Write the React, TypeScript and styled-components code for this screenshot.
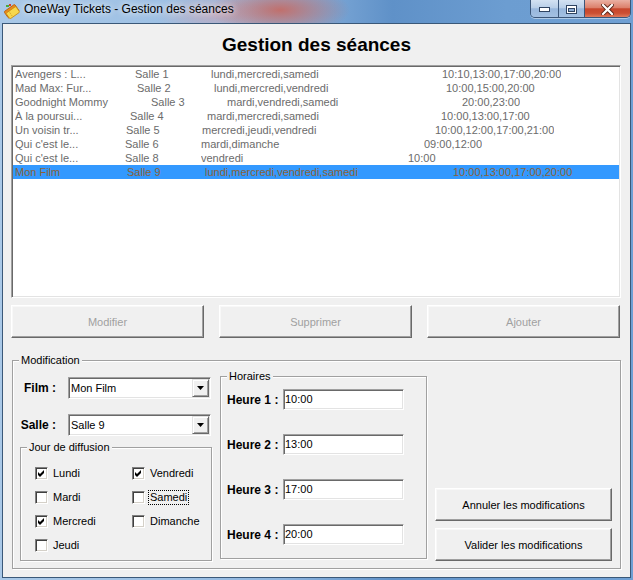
import React from 'react';
import styled, { createGlobalStyle } from 'styled-components';

const GlobalStyle = createGlobalStyle`
  html, body {
    margin: 0;
    padding: 0;
  }

  body {
    background: #6f9bd0;
    font-family: "Liberation Sans", Arial, sans-serif;
  }

  * {
    box-sizing: border-box;
  }
`;

type Seance = {
  film: string;
  salle: string;
  jours: string;
  heures: string;
  widths: [number, number, number];
  selected?: boolean;
};

// les colonnes sont alignées par tabulation dans la liste d'origine
const seances: Seance[] = [
  { film: 'Avengers : L...', salle: 'Salle 1', jours: 'lundi,mercredi,samedi', heures: '10:10,13:00,17:00,20:00', widths: [120, 76, 231] },
  { film: 'Mad Max: Fur...', salle: 'Salle 2', jours: 'lundi,mercredi,vendredi', heures: '10:00,15:00,20:00', widths: [122, 77, 232] },
  { film: 'Goodnight Mommy', salle: 'Salle 3', jours: 'mardi,vendredi,samedi', heures: '20:00,23:00', widths: [136, 76, 235] },
  { film: 'À la poursui...', salle: 'Salle 4', jours: 'mardi,mercredi,samedi', heures: '10:00,13:00,17:00', widths: [115, 77, 234] },
  { film: 'Un voisin tr...', salle: 'Salle 5', jours: 'mercredi,jeudi,vendredi', heures: '10:00,12:00,17:00,21:00', widths: [111, 76, 233] },
  { film: "Qui c'est le...", salle: 'Salle 6', jours: 'mardi,dimanche', heures: '09:00,12:00', widths: [110, 76, 223] },
  { film: "Qui c'est le...", salle: 'Salle 8', jours: 'vendredi', heures: '10:00', widths: [110, 76, 207] },
  { film: 'Mon Film', salle: 'Salle 9', jours: 'lundi,mercredi,vendredi,samedi', heures: '10:00,13:00,17:00,20:00', widths: [112, 78, 248], selected: true },
];

const jours = [
  { label: 'Lundi', checked: true },
  { label: 'Mardi', checked: false },
  { label: 'Mercredi', checked: true },
  { label: 'Jeudi', checked: false },
  { label: 'Vendredi', checked: true },
  { label: 'Samedi', checked: false, focused: true },
  { label: 'Dimanche', checked: false },
];

const heures = ['10:00', '13:00', '17:00', '20:00'];

const App = () => {
  return (
    <>
      <GlobalStyle />
      <Window>
        <TitleBar>
          <AppIcon width="16" height="16" viewBox="0 0 16 16">
            <g transform="rotate(-35 8 8)">
              <rect x="1" y="4" width="13" height="8" rx="1" fill="#e98a1c" stroke="#b85e0a" strokeWidth="0.8" />
            </g>
            <g transform="rotate(-35 9 9)">
              <rect x="2.5" y="6" width="12" height="7" rx="1" fill="#f7d84c" stroke="#c98a12" strokeWidth="0.8" />
              <line x1="6" y1="6.5" x2="6" y2="12.5" stroke="#c98a12" strokeWidth="0.7" strokeDasharray="1 1" />
            </g>
            <rect x="2" y="2" width="3" height="2" fill="#4caa3c" />
            <rect x="5" y="1" width="2" height="2" fill="#d83a2a" />
          </AppIcon>
          <Caption>OneWay Tickets - Gestion des séances</Caption>
          <Controls>
            <CtrlButton $w={27}>
              <svg width="11" height="5" viewBox="0 0 11 5">
                <rect x="0.5" y="0.5" width="10" height="4" fill="#fff" stroke="#2f4462" />
              </svg>
            </CtrlButton>
            <CtrlButton $w={26}>
              <svg width="11" height="9" viewBox="0 0 11 9">
                <rect x="0.5" y="0.5" width="10" height="8" fill="#fff" stroke="#2f4462" />
                <rect x="2.5" y="3.5" width="6" height="3" fill="#8eaed6" stroke="#2f4462" />
              </svg>
            </CtrlButton>
            <CtrlButton $w={46} $close>
              <svg width="13" height="11" viewBox="0 0 13 11">
                <path d="M2 1 L11 10 M11 1 L2 10" stroke="#5a2418" strokeWidth="4" strokeLinecap="square" />
                <path d="M2 1 L11 10 M11 1 L2 10" stroke="#fff" strokeWidth="2.2" strokeLinecap="square" />
              </svg>
            </CtrlButton>
          </Controls>
        </TitleBar>

        <Client>
          <Heading>Gestion des séances</Heading>

          <ListBox>
            {seances.map((s, i) => (
              <ListRow key={i} $selected={s.selected}>
                <Cell $w={s.widths[0]}>{s.film}</Cell>
                <Cell $w={s.widths[1]}>{s.salle}</Cell>
                <Cell $w={s.widths[2]}>{s.jours}</Cell>
                <Cell>{s.heures}</Cell>
              </ListRow>
            ))}
          </ListBox>

          <ButtonBar>
            <Button $w={193} disabled>Modifier</Button>
            <Button $w={193} disabled>Supprimer</Button>
            <Button $w={193} disabled>Ajouter</Button>
          </ButtonBar>

          <ModificationGroup>
            <Legend>Modification</Legend>
            <ModBody>
              <LeftColumn>
                <FieldRow $top={10}>
                  <FieldLabel>Film :</FieldLabel>
                  <Combo>
                    <ComboText>Mon Film</ComboText>
                    <DropButton>
                      <svg width="7" height="4" viewBox="0 0 7 4">
                        <polygon points="0,0 7,0 3.5,4" fill="#000" />
                      </svg>
                    </DropButton>
                  </Combo>
                </FieldRow>
                <FieldRow $top={15}>
                  <FieldLabel>Salle :</FieldLabel>
                  <Combo>
                    <ComboText>Salle 9</ComboText>
                    <DropButton>
                      <svg width="7" height="4" viewBox="0 0 7 4">
                        <polygon points="0,0 7,0 3.5,4" fill="#000" />
                      </svg>
                    </DropButton>
                  </Combo>
                </FieldRow>

                <JourGroup>
                  <Legend>Jour de diffusion</Legend>
                  <CheckGrid>
                    {jours.map((j) => (
                      <CheckItem key={j.label}>
                        <CheckBox>
                          {j.checked && (
                            <svg width="9" height="9" viewBox="0 0 9 9">
                              <polygon points="1,3 3,5 7,1 7,4 3,8 1,6" fill="#000" />
                            </svg>
                          )}
                        </CheckBox>
                        <CheckLabel $focused={j.focused}>{j.label}</CheckLabel>
                      </CheckItem>
                    ))}
                  </CheckGrid>
                </JourGroup>
              </LeftColumn>

              <HorairesGroup>
                <Legend>Horaires</Legend>
                <HourList>
                  {heures.map((h, i) => (
                    <HourRow key={i}>
                      <HourLabel>Heure {i + 1} :</HourLabel>
                      <TextInput>{h}</TextInput>
                    </HourRow>
                  ))}
                </HourList>
              </HorairesGroup>

              <RightColumn>
                <Button $w={177}>Annuler les modifications</Button>
                <Button $w={177}>Valider les modifications</Button>
              </RightColumn>
            </ModBody>
          </ModificationGroup>
        </Client>
      </Window>
    </>
  );
};

const Window = styled.div`
  width: 633px;
  height: 580px;
  display: flex;
  flex-direction: column;
  overflow: hidden;
  background:
    radial-gradient(ellipse 70px 26px at 280px 10px, rgba(198, 104, 96, 0.9), rgba(198, 104, 96, 0) 100%),
    radial-gradient(ellipse 60px 22px at 215px 14px, rgba(214, 160, 170, 0.6), rgba(214, 160, 170, 0) 100%),
    linear-gradient(90deg, #a9c8e7 0%, #9dc0e4 28%, #8db4de 45%, #5f91c8 62%, #6c9dd1 80%, #6f9fd3 100%);
`;

const TitleBar = styled.div`
  height: 23px;
  flex: none;
  display: flex;
  align-items: flex-start;
`;

const AppIcon = styled.svg`
  flex: none;
  margin: 3px 4px 0 4px;
`;

const Caption = styled.span`
  font-family: "Liberation Sans", Arial, sans-serif;
  font-size: 12px;
  line-height: 19px;
  color: #000;
  text-shadow: 0 0 6px rgba(255, 255, 255, 0.9), 0 0 10px rgba(255, 255, 255, 0.6);
`;

const Controls = styled.div`
  margin-left: auto;
  margin-right: 2px;
  display: flex;
  height: 18px;
  border: 1px solid #3b5679;
  border-top: none;
  border-radius: 0 0 5px 5px;
  overflow: hidden;
  box-shadow: 0 1px 0 rgba(255, 255, 255, 0.45);
`;

const CtrlButton = styled.div<{ $w: number; $close?: boolean }>`
  width: ${(p) => p.$w}px;
  display: flex;
  align-items: center;
  justify-content: center;
  padding-top: 1px;
  background: ${(p) =>
    p.$close
      ? 'linear-gradient(#eab0a3 0%, #dc806b 45%, #c7462c 52%, #cc4f33 78%, #e07a5c 100%)'
      : 'linear-gradient(#d3e2f2 0%, #b9cfe8 45%, #98b7dc 52%, #a3c0e2 100%)'};

  & + & {
    border-left: 1px solid #3b5679;
  }
`;

const Client = styled.div`
  flex: 1;
  margin: 0 2px 2px 2px;
  border: 1px solid #3a5878;
  background: #f0f0f0;
  display: flex;
  flex-direction: column;
  font-family: "Liberation Sans", Arial, sans-serif;
  font-size: 11px;
  color: #000;
`;

const Heading = styled.h1`
  margin: 0;
  height: 41px;
  line-height: 41px;
  text-align: center;
  font-size: 19px;
  font-weight: bold;
`;

const ListBox = styled.div`
  margin: 0 9px 0 8px;
  height: 233px;
  padding: 1px;
  background: #fff;
  border: 1px solid;
  border-color: #a0a0a0 #fff #fff #a0a0a0;
  box-shadow: inset 1px 1px 0 #696969, inset -1px -1px 0 #e3e3e3;
`;

const ListRow = styled.div<{ $selected?: boolean }>`
  display: flex;
  height: 14px;
  line-height: 14px;
  padding-left: 2px;
  white-space: nowrap;
  color: ${(p) => (p.$selected ? '#8a6238' : '#6b6b6b')};
  background: ${(p) => (p.$selected ? '#3399ff' : 'transparent')};
`;

const Cell = styled.span<{ $w?: number }>`
  flex: none;
  width: ${(p) => (p.$w ? `${p.$w}px` : 'auto')};
  overflow: hidden;
`;

const ButtonBar = styled.div`
  display: flex;
  gap: 15px;
  margin: 7px 9px 0 8px;
`;

const Button = styled.button<{ $w: number }>`
  width: ${(p) => p.$w}px;
  height: 33px;
  padding: 0;
  font-family: "Liberation Sans", Arial, sans-serif;
  font-size: 11px;
  color: #000;
  background: #f0f0f0;
  border: 1px solid;
  border-color: #fff #696969 #696969 #fff;
  box-shadow: inset -1px -1px 0 #a0a0a0, inset 1px 1px 0 #f8f8f8;

  &:disabled {
    color: #a0a0a0;
  }
`;

const Group = styled.fieldset`
  margin: 0;
  padding: 0;
  min-width: 0;
  border: 1px solid #a0a0a0;
  box-shadow: inset 1px 1px 0 #fff, 1px 1px 0 #fff;
`;

const Legend = styled.legend`
  margin-left: 6px;
  padding: 0 2px;
  font-size: 11px;
  line-height: 13px;
  color: #000;
  background: #f0f0f0;
`;

const ModificationGroup = styled(Group)`
  margin: 16px 9px 0 9px;
`;

const ModBody = styled.div`
  display: flex;
  padding: 0 8px 7px 1px;
`;

const LeftColumn = styled.div`
  width: 198px;
  display: flex;
  flex-direction: column;
`;

const FieldRow = styled.div<{ $top: number }>`
  display: flex;
  align-items: center;
  height: 22px;
  margin-top: ${(p) => p.$top}px;
`;

const FieldLabel = styled.label`
  width: 42px;
  margin-right: 12px;
  text-align: right;
  font-size: 12px;
  font-weight: bold;
`;

const Combo = styled.div`
  width: 143px;
  height: 22px;
  display: flex;
  align-items: center;
  background: #fff;
  border: 1px solid;
  border-color: #a0a0a0 #fff #fff #a0a0a0;
  box-shadow: inset 1px 1px 0 #696969, inset -1px -1px 0 #e3e3e3;
`;

const ComboText = styled.span`
  padding-left: 2px;
  font-size: 11px;
`;

const DropButton = styled.div`
  margin: 0 1px 0 auto;
  width: 17px;
  height: 18px;
  display: flex;
  align-items: center;
  justify-content: center;
  background: #f0f0f0;
  border: 1px solid;
  border-color: #e3e3e3 #696969 #696969 #e3e3e3;
  box-shadow: inset 1px 1px 0 #fff, inset -1px -1px 0 #a0a0a0;
`;

const JourGroup = styled(Group)`
  margin: 5px 0 0 6px;
  width: 192px;
`;

const CheckGrid = styled.div`
  display: grid;
  grid-template-columns: 97px 1fr;
  grid-template-rows: repeat(4, 24px);
  grid-auto-flow: column;
  padding: 7px 0 3px 14px;
`;

const CheckItem = styled.div`
  display: flex;
  align-items: center;
  gap: 5px;
`;

const CheckBox = styled.span`
  width: 13px;
  height: 13px;
  display: flex;
  align-items: center;
  justify-content: center;
  background: #fff;
  border: 1px solid;
  border-color: #808080 #fff #fff #808080;
  box-shadow: inset 1px 1px 0 #404040, inset -1px -1px 0 #d4d0c8;
`;

const CheckLabel = styled.span<{ $focused?: boolean }>`
  font-size: 11px;
  line-height: 13px;
  padding: 0 1px;
  margin-left: -1px;
  outline: ${(p) => (p.$focused ? '1px dotted #000' : 'none')};
`;

const HorairesGroup = styled(Group)`
  margin: 3px 0 0 8px;
  width: 207px;
  align-self: flex-start;
`;

const HourList = styled.div`
  display: flex;
  flex-direction: column;
  gap: 24px;
  padding: 6px 0 13px 6px;
`;

const HourRow = styled.div`
  display: flex;
  align-items: center;
  height: 21px;
`;

const HourLabel = styled.label`
  width: 56px;
  font-size: 12px;
  font-weight: bold;
  white-space: nowrap;
`;

const TextInput = styled.div`
  width: 121px;
  height: 21px;
  padding-left: 1px;
  line-height: 19px;
  font-size: 11px;
  background: #fff;
  border: 1px solid;
  border-color: #a0a0a0 #fff #fff #a0a0a0;
  box-shadow: inset 1px 1px 0 #696969, inset -1px -1px 0 #e3e3e3;
`;

const RightColumn = styled.div`
  margin-left: 8px;
  display: flex;
  flex-direction: column;
  justify-content: flex-end;
  gap: 7px;
`;

export default App;
